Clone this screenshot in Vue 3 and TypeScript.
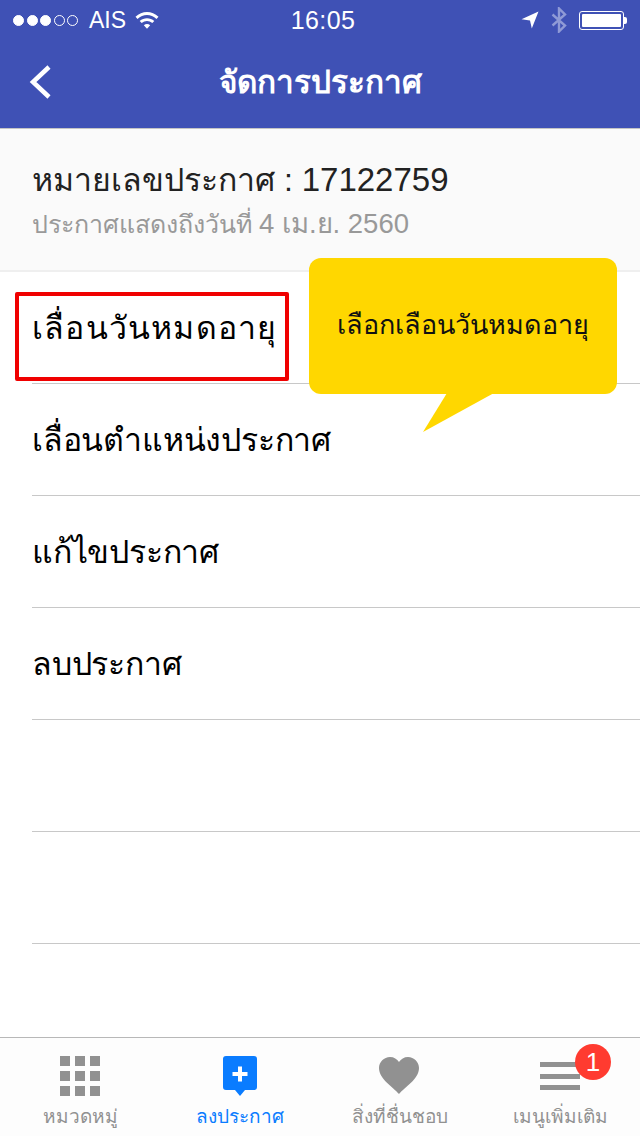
<script setup lang="ts">
const rows: string[] = ['เลื่อนวันหมดอายุ', 'เลื่อนตำแหน่งประกาศ', 'แก้ไขประกาศ', 'ลบประกาศ', '', '']
</script>

<template>
  <div class="page">
    <div class="top">
      <div class="status">
        <div class="st-left">
          <span class="dot on"></span><span class="dot on"></span><span class="dot on"></span><span class="dot"></span><span class="dot"></span>
          <span class="carrier">AIS</span>
          <svg class="wifi" width="24" height="18" viewBox="0 0 24 18">
            <path d="M0.500 5.800C7-.6 17-.6 23.500 5.800l-2 2.100C16 2.700 8 2.700 2.500 7.900z" fill="#fff"/>
            <path d="M4.700 10C8.800 6.300 15.200 6.300 19.300 10l-2 2.100C14.200 9.400 9.800 9.400 6.700 12.100z" fill="#fff"/>
            <path d="M8.800 14.200c1.900-1.500 4.500-1.500 6.400 0L12 17.800z" fill="#fff"/>
          </svg>
        </div>
        <div class="time">16:05</div>
        <div class="st-right">
          <svg width="18" height="18" viewBox="0 0 18 18"><path d="M17.500 0.500 10.800 17.500 9 9.500 0.500 8.200z" fill="#fff"/></svg>
          <svg class="bt" width="16" height="26" viewBox="0 0 16 26"><path d="M1.500 7.500 14 18.500 8 24.500V1.500L14 7.500 1.500 18.500" fill="none" stroke="#8f9ad6" stroke-width="2.400"/></svg>
          <div class="battery"><div class="fill"></div></div>
          <div class="nub"></div>
        </div>
      </div>
      <div class="nav">
        <svg class="back" width="24" height="36" viewBox="0 0 24 36"><path d="M21 3 5 18l16 15" fill="none" stroke="#fff" stroke-width="4.500"/></svg>
        <h1>จัดการประกาศ</h1>
      </div>
    </div>

    <div class="summary">
      <div class="num">หมายเลขประกาศ : <span class="id">17122759</span></div>
      <div class="until">ประกาศแสดงถึงวันที่ <span class="dig">4 เม.ย. 2560</span></div>
    </div>

    <div class="list">
      <div v-for="(r, i) in rows" :key="i" class="row" :class="{ wide: i === 0 }"><span>{{ r }}</span></div>
      <div class="mark"></div>
      <div class="bubble">
        เลือกเลือนวันหมดอายุ
        <svg class="tail" width="80" height="42" viewBox="0 0 80 42"><path d="M24 0H71L0 39z" fill="#ffd700"/></svg>
      </div>
    </div>

    <div class="tabbar">
      <div class="tab">
        <svg width="44" height="44" viewBox="0 0 44 44" fill="#919191">
          <rect x="2" y="2" width="10" height="10"/><rect x="17" y="2" width="10" height="10"/><rect x="32" y="2" width="10" height="10"/>
          <rect x="2" y="17" width="10" height="10"/><rect x="17" y="17" width="10" height="10"/><rect x="32" y="17" width="10" height="10"/>
          <rect x="2" y="32" width="10" height="10"/><rect x="17" y="32" width="10" height="10"/><rect x="32" y="32" width="10" height="10"/>
        </svg>
        <span>หมวดหมู่</span>
      </div>
      <div class="tab active">
        <svg width="44" height="44" viewBox="0 0 44 44">
          <path d="M8 2h28a3 3 0 0 1 3 3v28a3 3 0 0 1-3 3h-9l-5 6-5-6H8a3 3 0 0 1-3-3V5a3 3 0 0 1 3-3z" fill="#0a7cff"/>
          <path d="M22 12.500v15M14.500 20h15" stroke="#fff" stroke-width="4"/>
        </svg>
        <span>ลงประกาศ</span>
      </div>
      <div class="tab">
        <svg width="44" height="44" viewBox="0 0 44 44"><path d="M21 40C15 33 1 25 1 14 1 8 6 3 12 3c4 0 7 2 9 5 2-3 5-5 9-5 6 0 11 5 11 11 0 11-14 19-20 26z" fill="#919191"/></svg>
        <span>สิ่งที่ชื่นชอบ</span>
      </div>
      <div class="tab">
        <svg width="44" height="44" viewBox="0 0 44 44" fill="#919191"><rect x="2" y="8" width="40" height="5"/><rect x="2" y="20" width="40" height="5"/><rect x="2" y="31" width="40" height="5"/></svg>
        <span>เมนูเพิ่มเติม</span>
        <div class="badge">1</div>
      </div>
    </div>
  </div>
</template>

<style>
html, body { margin: 0; padding: 0; }
</style>

<style scoped>
.page {
  width: 640px;
  height: 1136px;
  display: flex;
  flex-direction: column;
  background: #fff;
  overflow: hidden;
  font-family: "Liberation Sans", "Noto Sans", Roboto, sans-serif;
}
.top { background: #3f51b5; height: 129px; color: #fff; flex: none; box-sizing: border-box; border-bottom: 1px solid #c4c4c4; }
.status { height: 40px; display: flex; align-items: center; justify-content: space-between; padding: 0 13px 0 13px; position: relative; }
.st-left { display: flex; align-items: center; }
.dot { width: 11px; height: 11px; border-radius: 50%; border: 1px solid #fff; box-sizing: border-box; margin-right: 2.600px; }
.dot.on { background: #fff; }
.carrier { font-size: 23px; margin: 0 9px 0 8px; }
.time { position: absolute; left: 6px; right: 0; text-align: center; font-size: 25px; letter-spacing: 0.4px; }
.st-right { display: flex; align-items: center; margin-left: auto; }
.bt { margin: 0 12px 0 12px; }
.battery { width: 45px; height: 19px; border: 1px solid #fff; border-radius: 3px; box-sizing: border-box; padding: 2px; }
.fill { background: #fff; height: 100%; border-radius: 1px; }
.nub { width: 3px; height: 7px; background: #fff; border-radius: 0 2px 2px 0; }
.nav { height: 88px; display: flex; align-items: center; justify-content: center; position: relative; padding-bottom: 2px; box-sizing: border-box; }
.back { position: absolute; left: 28px; top: 24px; }
h1 { margin: 0; font-size: 31.500px; font-weight: 700; line-height: 1; }

.summary { flex: none; height: 143px; box-sizing: border-box; background: #fafafa; border-bottom: 2px solid #efefef; padding: 29px 32px 0; }
.num { font-size: 32px; line-height: 44px; color: #222; }
.id { font-size: 33px; }
.until { font-size: 25px; line-height: 44px; color: #999; }
.dig { font-size: 27.500px; }

.list { position: relative; flex: none; height: 672px; }
.row { height: 112px; box-sizing: border-box; margin-left: 32px; border-bottom: 1px solid #c8c8c8; padding-top: 34px; font-size: 32px; line-height: 44px; color: #000; letter-spacing: -0.2px; }
.row.wide { letter-spacing: 1.200px; }
.mark { position: absolute; left: 15px; top: 20px; width: 274px; height: 89px; box-sizing: border-box; border: 4px solid #f00000; border-radius: 2px; }
.bubble { position: absolute; left: 309px; top: -14px; width: 308px; height: 136px; background: #ffd700; border-radius: 12px; font-size: 27px; line-height: 30px; text-align: center; padding-top: 52px; box-sizing: border-box; color: #111; white-space: nowrap; }
.tail { position: absolute; left: 114px; top: 135px; }

.tabbar { flex: none; margin-top: auto; height: 99px; box-sizing: border-box; border-top: 1px solid #b8b8b8; background: #fdfdfd; display: grid; grid-template-columns: repeat(4, 160px); }
.tab { position: relative; display: flex; flex-direction: column; align-items: center; padding-top: 16px; color: #919191; }
.tab svg { display: block; flex: none; }
.tab span { font-size: 19px; line-height: 30px; margin-top: 4px; white-space: nowrap; }
.tab.active span { color: #0a7cff; }
.badge { position: absolute; left: 95px; top: 6px; width: 36px; height: 36px; border-radius: 50%; background: #ff3b30; color: #fff; text-align: center; font-size: 26px; line-height: 36px; }
</style>
